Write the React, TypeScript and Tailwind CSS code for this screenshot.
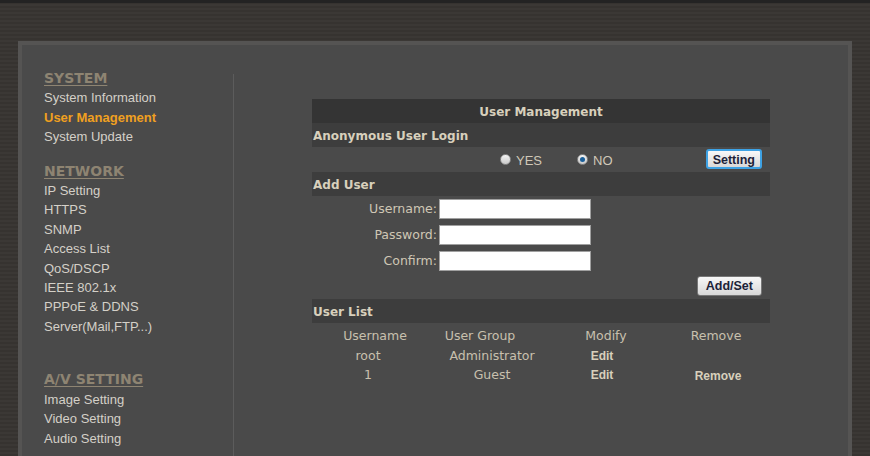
import React from "react"

const sans = { fontFamily: '"Liberation Sans", Arial, sans-serif' }
const verdana = { fontFamily: '"DejaVu Sans", Verdana, sans-serif' }

type Section = { title: string; items: string[]; gap?: boolean }

const sections: Section[] = [
  { title: "SYSTEM", items: ["System Information", "User Management", "System Update"] },
  {
    title: "NETWORK",
    items: ["IP Setting", "HTTPS", "SNMP", "Access List", "QoS/DSCP", "IEEE 802.1x", "PPPoE & DDNS", "Server(Mail,FTP...)"],
  },
  { title: "A/V SETTING", items: ["Image Setting", "Video Setting", "Audio Setting"], gap: true },
]

function Radio({ checked }: { checked?: boolean }) {
  return (
    <span className="w-[11px] h-[11px] rounded-full border border-[#8a8a8a] bg-gradient-to-b from-[#f4f4f4] to-[#c8c8c8] flex items-center justify-center shrink-0">
      {checked && <span className="w-[5px] h-[5px] rounded-full bg-[#1a5f9a]" />}
    </span>
  )
}

function Btn({ label, focus }: { label: string; focus?: boolean }) {
  return (
    <button
      style={sans}
      className={`h-[20px] rounded-[3px] text-[12.5px] font-bold text-[#1c2238] bg-gradient-to-b from-[#f8f8f8] to-[#d8d8d8] ${
        focus ? "px-[5px] border-2 border-[#3ea2e4]" : "px-[8px] border border-[#777]"
      }`}
    >
      {label}
    </button>
  )
}

function Bar({ children, center }: { children: React.ReactNode; center?: boolean }) {
  return (
    <div
      style={verdana}
      className={`h-[24px] flex items-center px-[1px] pt-[1px] text-[12px] font-bold text-[#d8d0bc] ${
        center ? "justify-center bg-[#343434]" : "bg-[#3d3d3d]"
      }`}
    >
      {children}
    </div>
  )
}

export default function App() {
  return (
    <div className="w-[870px] h-[456px] overflow-hidden bg-[repeating-linear-gradient(180deg,#3b3835_0px,#3b3835_2px,#363330_2px,#363330_4px)]">
      <div className="h-[3px] bg-[#232323]" />
      <div className="ml-[18px] mt-[38px] w-[834px] h-[500px] border-4 border-[#555453] bg-[#4a4a4a] flex pt-[29px]">
        {/* Sidebar */}
        <div className="w-[212px] border-r border-[#5c5c5c] pl-[22px]">
          <div className="-mt-[5px]">
            {sections.map((s, i) => (
              <div key={s.title} className={i === 0 ? "" : s.gap ? "mt-[34px]" : "mt-[15px]"}>
                <div style={verdana} className="leading-[19.4px] text-[14px] font-bold text-[#8e8472] underline underline-offset-2">
                  {s.title}
                </div>
                {s.items.map((it) => (
                  <div
                    key={it}
                    style={sans}
                    className={`leading-[19.4px] text-[13px] ${
                      it === "User Management" ? "font-bold text-[#f0a020]" : "text-[#d4d0c8]"
                    }`}
                  >
                    {it}
                  </div>
                ))}
              </div>
            ))}
          </div>
        </div>

        {/* Main */}
        <div className="ml-[78px] mt-[25px] w-[458px]">
          <Bar center>User Management</Bar>
          <Bar>Anonymous User Login</Bar>
          <div style={sans} className="h-[25px] flex items-center pl-[188px] pr-[8px] text-[13px] text-[#d0c8b8]">
            <Radio />
            <span className="ml-[5px] mt-[3px]">YES</span>
            <span className="ml-[35px]">
              <Radio checked />
            </span>
            <span className="ml-[5px] mt-[3px]">NO</span>
            <span className="ml-auto">
              <Btn label="Setting" focus />
            </span>
          </div>
          <Bar>Add User</Bar>
          <div className="pt-[3px] flex flex-col gap-[6px]">
            {["Username:", "Password:", "Confirm:"].map((l) => (
              <div key={l} className="flex items-center h-[20px]">
                <span style={verdana} className="w-[126px] text-right pr-[1px] pt-[1px] text-[12.5px] text-[#cfc7b5]">
                  {l}
                </span>
                <span className="ml-[1px] w-[152px] h-[20px] bg-white border border-[#a0a0a0]" />
              </div>
            ))}
          </div>
          <div className="flex justify-end pr-[8px] mt-[5px] mb-[3px]">
            <Btn label="Add/Set" />
          </div>
          <Bar>User List</Bar>
          <div style={verdana} className="flex h-[24px] items-center text-[12.5px] text-[#c8c0ae] pt-[2px]">
            <span className="w-[126px] text-center">Username</span>
            <span className="w-[84px] text-center">User Group</span>
            <span className="w-[168px] text-center">Modify</span>
            <span className="w-[52px] text-center">Remove</span>
          </div>
          {[
            { u: "root", g: "Administrator", r: "" },
            { u: "1", g: "Guest", r: "Remove" },
          ].map((row) => (
            <div key={row.u} className="flex h-[19px] items-center">
              <span style={verdana} className="w-[112px] text-center text-[12.5px] text-[#c8c0ae]">
                {row.u}
              </span>
              <span style={verdana} className="w-[136px] text-center text-[12.5px] text-[#c8c0ae]">
                {row.g}
              </span>
              <span style={sans} className="w-[84px] text-center text-[12px] font-bold text-[#d8d0bc] -mt-[2px]">
                Edit
              </span>
              <span style={sans} className="ml-[22px] w-[104px] text-center text-[12px] font-bold text-[#d8d0bc]">
                {row.r}
              </span>
            </div>
          ))}
        </div>
      </div>
    </div>
  )
}
